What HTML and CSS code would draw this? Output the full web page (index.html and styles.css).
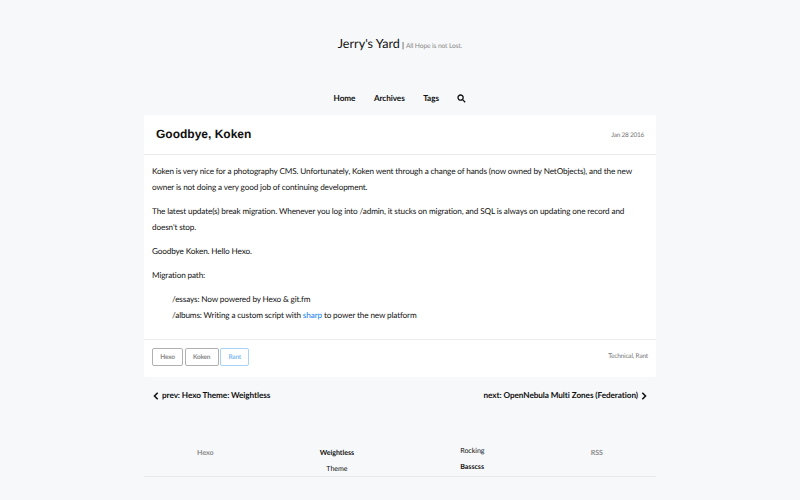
FILE: index.html
```html
<!DOCTYPE html>
<html lang="en">
<head>
<meta charset="utf-8">
<title>Jerry's Yard</title>
<link rel="stylesheet" href="styles.css">
</head>
<body>
<header class="site-header"><a class="site-title">Jerry's Yard</a><span class="divider">|</span><span class="tagline">All Hope is not Lost.</span></header>
<nav class="site-nav">
<a>Home</a><a>Archives</a><a>Tags</a>
<svg class="search" viewBox="0 0 9 9"><circle cx="3.6" cy="3.6" r="2.6"/><path d="M5.6 5.6L8.2 8.2"/></svg>
</nav>
<main class="post">
<div class="post-head"><h1>Goodbye, Koken</h1><time>Jan 28 2016</time></div>
<div class="post-body">
<p>Koken is very nice for a photography CMS. Unfortunately, Koken went through a change of hands (now owned by NetObjects), and the new<br>owner is not doing a very good job of continuing development.</p>
<p>The latest update(s) break migration. Whenever you log into /admin, it stucks on migration, and SQL is always on updating one record and<br>doesn't stop.</p>
<p>Goodbye Koken. Hello Hexo.</p>
<p>Migration path:</p>
<ul><li>/essays: Now powered by Hexo &amp; git.fm</li><li>/albums: Writing a custom script with <a class="link">sharp</a> to power the new platform</li></ul>
</div>
<div class="post-foot"><div class="tags"><a>Hexo</a><a>Koken</a><a class="active">Rant</a></div><span class="cats">Technical, Rant</span></div>
</main>
<div class="pager">
<a><svg class="chev" viewBox="0 0 6 8"><path d="M4.7 .8L1.5 4l3.2 3.2"/></svg><span>prev: Hexo Theme: Weightless</span></a>
<a><span>next: OpenNebula Multi Zones (Federation)</span><svg class="chev" viewBox="0 0 6 8"><path d="M1.3 .8L4.5 4 1.3 7.2"/></svg></a>
</div>
<footer class="site-footer">
<div class="muted">Hexo</div><div><b>Weightless</b><span>Theme</span></div><div class="raised"><span>Rocking</span><b>Basscss</b></div><div class="muted">RSS</div>
</footer>
</body>
</html>
```
FILE: styles.css
```css
* { box-sizing: border-box; }
body { margin: 0; height: 500px; overflow: hidden; background: #f7f8fa; color: #111; font: 8px/16px Lato, sans-serif; text-rendering: geometricPrecision; font-variant-ligatures: none; }
.site-header { height: 88px; display: flex; justify-content: center; align-items: baseline; padding-top: 36px; white-space: nowrap; }
.site-title { font-size: 12.6px; }
.divider { margin: 0 2px; }
.tagline { font-size: 6.7px; letter-spacing: -.12px; color: #888; }
.site-nav { height: 27px; display: flex; justify-content: center; gap: 18.5px; padding-top: 2px; font-size: 8.2px; letter-spacing: -.08px; font-weight: 700; }
.search { width: 9px; height: 9px; margin-top: 4px; fill: none; stroke: #111; stroke-width: 1.3; }
.post { width: 512px; height: 262px; margin: 0 auto; background: #fff; border-radius: 1px; }
.post-head { height: 40px; border-bottom: 1px solid #ebeced; display: flex; justify-content: space-between; align-items: center; padding: 0 12px; }
h1 { margin: 0; padding-bottom: 1px; font: 700 12px/16px "Liberation Sans", sans-serif; }
time, .cats { font-size: 6.5px; color: #777; }
time { padding-top: 2px; letter-spacing: -.25px; }
.cats { padding-top: 1px; letter-spacing: -.18px; }
.post-body { height: 184px; padding: 8px; white-space: nowrap; font-size: 8.2px; letter-spacing: -.138px; }
p { margin: 0 0 8px; }
ul { margin: 0; padding: 0 0 0 20px; list-style: none; }
.link { color: #1480f0; }
.post-foot { height: 38px; border-top: 1px solid #ebeced; display: flex; justify-content: space-between; padding: 8px; }
.tags { display: flex; gap: 1.5px; }
.tags a { height: 18px; padding: 0 7.3px; border: 1px solid #b0b0b0; border-radius: 2px; font-size: 6.5px; line-height: 17px; letter-spacing: -.2px; font-weight: 700; color: #888; }
.tags .active { color: #7fbcf3; border-color: #a8d2f7; }
.pager { width: 512px; margin: 0 auto; padding: 10px 9px 0; display: flex; justify-content: space-between; font-size: 8.2px; letter-spacing: -.075px; font-weight: 700; }
.pager a { display: flex; align-items: center; gap: 3px; }
.chev { width: 6px; height: 8px; margin-top: 1px; fill: none; stroke: #111; stroke-width: 1.6; }
.site-footer { width: 512px; height: 32px; margin: 42px auto 0; border-bottom: 1px solid #e6e8ea; display: flex; justify-content: space-around; font-size: 7.1px; letter-spacing: -.05px; text-align: center; }
.site-footer b, .site-footer span { display: block; }
.site-footer .raised { margin-top: -2px; text-align: left; }
.site-footer .muted { font-weight: 700; color: #8c8c8c; }
```
